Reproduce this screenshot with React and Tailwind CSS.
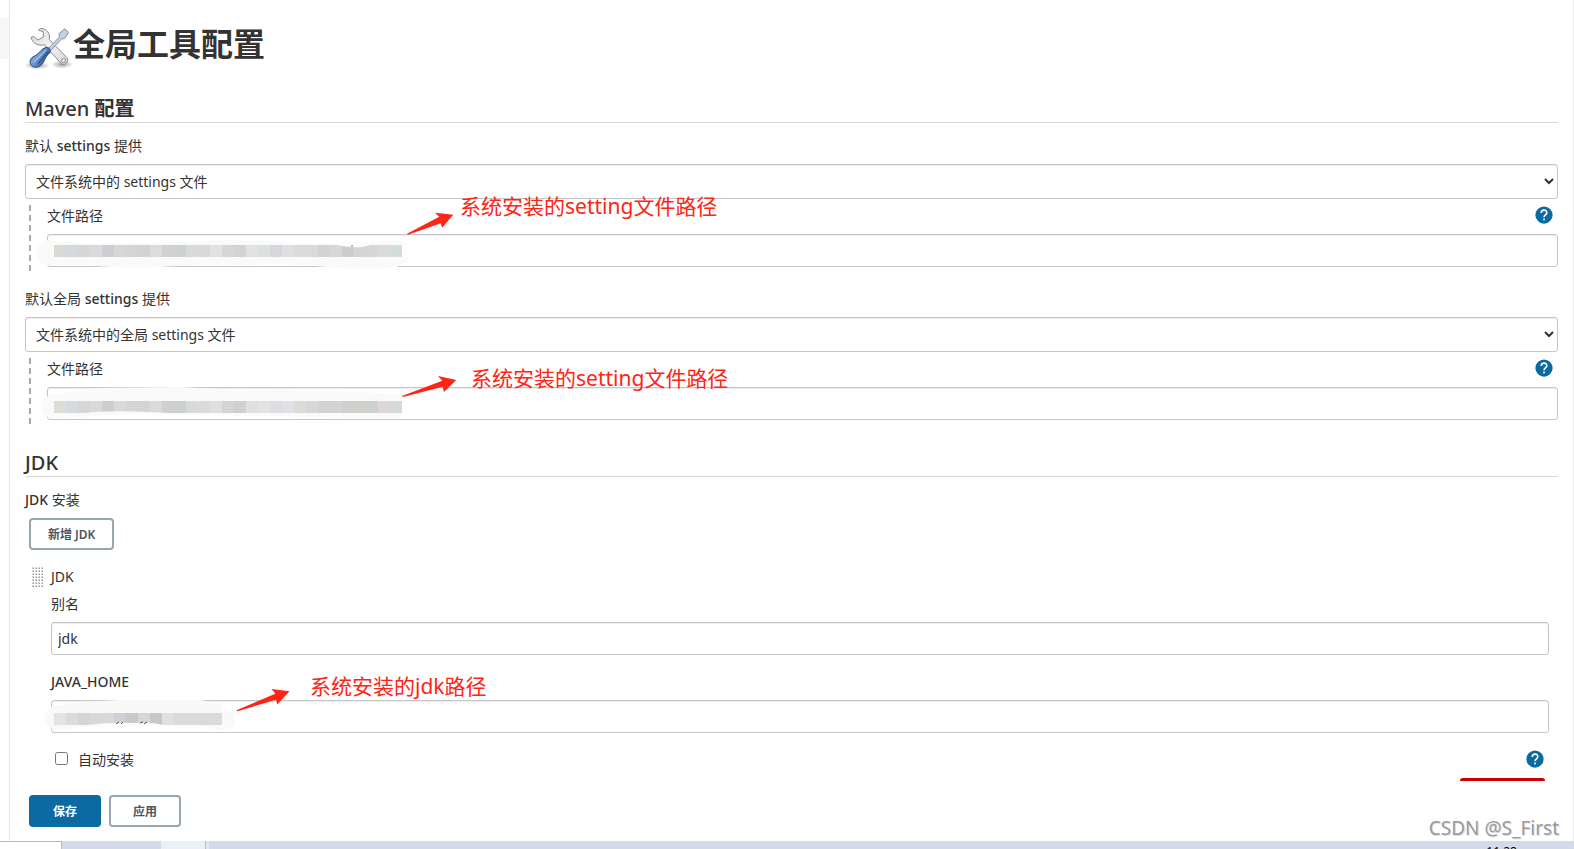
import React from "react";

const CELL = 12;

const MOSAIC_SETTINGS = [
  "#dcd9d5", "#d4d9df", "#d8d5d9", "#d8dadd", "#d0cdd2", "#d6d6d6", "#d3d5d5", "#d2d4d3", "#dddcda", "#d0d1d1",
  "#cdd1d2", "#d9dbda", "#d8dad9", "#e2e2e1", "#d6d6d6", "#d4d3d2", "#dfe3e5", "#dde0e0", "#d6d7da", "#e2dde0",
  "#dadcdc", "#d8dbda", "#d5d1d4", "#d6d7d7", "#cfccd0", "#d5d6d2", "#d3d7d7", "#dbdbda", "#d5dddc",
];

const MOSAIC_GLOBAL = [
  "#dddcd7", "#d5dadf", "#d7d6d7", "#dadadc", "#d0ccd0", "#d9d9d9", "#d3d5d4", "#d3d4d3", "#dbdad9", "#cfd1d1",
  "#cbd0d0", "#d8dad9", "#dadcda", "#e0e0df", "#d4d4d4", "#d2d0cf", "#dee0e2", "#e4e3e1", "#dddee0", "#e2e0e4",
  "#dbdcd9", "#d7d6d9", "#d5d2d5", "#d2d3d3", "#cfcfd0", "#cfcfcc", "#cdd0d0", "#dad8d6", "#d6dad9",
];

const MOSAIC_JDK = [
  "#e3e3e3", "#dbdbdc", "#d8d4d3", "#d8d8d8", "#d9d9d9", "#d2ced6", "#c9c9c9", "#d7d7d8", "#c7c7c7", "#e0e0df",
  "#dadad9", "#dadada", "#d9dada", "#dadadd",
];

function Mosaic({ x, y, colors }) {
  return colors.map((fill, i) => (
    <rect key={i} x={x + i * CELL} y={y} width={CELL} height={CELL} fill={fill} shapeRendering="crispEdges" />
  ));
}

function ToolsIcon() {
  return (
    <svg viewBox="0 0 48 48" className="size-12 shrink-0" aria-hidden="true">
      <defs>
        <linearGradient id="metal" x1="0" y1="0" x2="1" y2="1">
          <stop offset="0" stopColor="#d6d6d6" />
          <stop offset="0.5" stopColor="#f4f4f4" />
          <stop offset="1" stopColor="#d2d2d2" />
        </linearGradient>
        <linearGradient id="grip" x1="0" y1="0" x2="1" y2="0.6">
          <stop offset="0" stopColor="#2f62ad" />
          <stop offset="0.4" stopColor="#7ea6dc" />
          <stop offset="1" stopColor="#204a87" />
        </linearGradient>
        <radialGradient id="ground">
          <stop offset="0" stopColor="#000" stopOpacity="0.38" />
          <stop offset="1" stopColor="#000" stopOpacity="0" />
        </radialGradient>
      </defs>
      <ellipse cx="12" cy="42.500" rx="13" ry="4" fill="url(#ground)" />
      <ellipse cx="37" cy="41.500" rx="11" ry="4" fill="url(#ground)" />
      <path
        d="M15.500 5.500 C19.500 5 24 8.500 24.500 13 L24.300 16.500 L41.800 34.500 C44.500 38.500 40.500 43 36.300 40.800 L19.500 21.800 C13.500 23.300 7.500 20.500 6 14.500 L8.500 13.300 L13 17 L18.300 14 L18.300 8.800 L13.500 7 Z"
        fill="url(#metal)"
        stroke="#8b8d88"
        strokeWidth="1"
        strokeLinejoin="round"
      />
      <circle cx="38.500" cy="37.500" r="2" fill="#eee" stroke="#8b8d88" />
      <path
        d="M23.500 25.500 L34.500 13.800 L34 10.500 L39.800 5.800 L43.600 9.500 L39.500 15.500 L36.500 16 L25.800 27.500 Z"
        fill="#c6d0dc"
        stroke="#8795a6"
        strokeWidth="1"
        strokeLinejoin="round"
      />
      <path
        d="M20.500 24.500 C23 23.500 26 26 25 29.500 C22.500 32 20.500 34 19.500 37 C17.500 42 13 45.500 8.500 43.800 C4.500 42.300 4 37.500 7 34.500 C11 32.500 15 29.500 17.500 26 Z"
        fill="url(#grip)"
        stroke="#204a87"
        strokeWidth="1"
      />
      <path d="M21 27 L9.500 38.500" stroke="#b4cdee" strokeWidth="1.500" strokeLinecap="round" opacity="0.8" />
      <path d="M23 29 L13.500 40" stroke="#1c427c" strokeWidth="1.500" strokeLinecap="round" opacity="0.6" />
    </svg>
  );
}

function DragHandle() {
  return (
    <svg width="12" height="21" className="shrink-0" shapeRendering="crispEdges" aria-hidden="true">
      <defs>
        <pattern id="grain" width="3" height="3" patternUnits="userSpaceOnUse">
          <rect width="2" height="2" fill="#d6d6d6" />
          <rect x="1" y="1" width="1" height="1" fill="#8f8f8f" />
        </pattern>
      </defs>
      <rect width="12" height="21" fill="url(#grain)" />
    </svg>
  );
}

function HelpButton({ label }) {
  return (
    <button type="button" aria-label={label} className="flex h-5 w-[18px] shrink-0 items-center">
      <svg viewBox="0 0 24 24" className="size-[18px]">
        <circle cx="12" cy="12" r="11.500" fill="#0b6aa2" />
        <path
          d="M8.300 9.300 C8.300 4.200 15.700 4.200 15.700 9 C15.700 11.800 12 12 12 15"
          fill="none"
          stroke="#fff"
          strokeWidth="2.200"
        />
        <rect x="10.900" y="16.800" width="2.300" height="2.300" fill="#fff" />
      </svg>
    </button>
  );
}

function SectionTitle({ children }) {
  return (
    <h2 className="mt-6 border-b border-[#d9d9d9] text-[20px] leading-[27px] font-medium">{children}</h2>
  );
}

function ProviderSelect({ id, label, option }) {
  return (
    <>
      <label htmlFor={id} className="block text-[14px] leading-5">
        {label}
      </label>
      <select
        id={id}
        className="mt-2 block h-[35px] w-full rounded-[3px] border border-[#c6c6c6] bg-white px-[6px] text-[14px] shadow-[inset_0_1px_1px_rgba(0,0,0,0.075)]"
      >
        <option>{option}</option>
      </select>
    </>
  );
}

function TextField({ id, value }) {
  return (
    <input
      id={id}
      type="text"
      defaultValue={value}
      className="block h-[33px] w-full rounded-[3px] border border-[#c6c6c6] bg-white px-[6px] text-[14px] shadow-[inset_0_1px_1px_rgba(0,0,0,0.075)]"
    />
  );
}

function PathGroup({ id, children }) {
  return (
    <div className="mt-1.5 flex">
      <div className="mr-4 ml-1 w-[2px] shrink-0 bg-[repeating-linear-gradient(to_bottom,#a9a9a9_0px,#a9a9a9_6px,transparent_6px,transparent_10px)]" />
      <div className="grow pb-[5px]">
        <div className="mb-[7px] flex h-[22px] items-start justify-between pr-[5px]">
          <label htmlFor={id} className="text-[14px] leading-[22px]">
            文件路径
          </label>
          <HelpButton label="文件路径 帮助" />
        </div>
        <div className="relative">
          <TextField id={id} />
          {children}
        </div>
      </div>
    </div>
  );
}

function Note({ className, children }) {
  return (
    <p className={`pointer-events-none absolute text-[21px] leading-7 whitespace-nowrap text-[#ff2414] ${className}`}>
      {children}
    </p>
  );
}

export default function App() {
  return (
    <div className="flex min-h-screen flex-col bg-white font-['Noto_Sans','Noto_Sans_CJK_SC',sans-serif] text-[#333]">
      <div className="flex grow">
        <aside className="w-[10px] shrink-0 border-r border-[#e8e8e8] pt-[18px]">
          <div className="h-[41px] bg-[#f7f7f7]" />
        </aside>

        <main className="grow border-r border-[#ececec] pt-[23px] pr-[15px] pb-[14px] pl-[15px]">
          <header className="flex h-12">
            <ToolsIcon />
            <h1 className="text-[32px] leading-[42px] font-bold">全局工具配置</h1>
          </header>

          <SectionTitle>
            Maven <span className="font-bold">配置</span>
          </SectionTitle>
          <div className="mt-[13px]">
            <ProviderSelect
              id="settings"
              label={
                <>
                  默认 <span className="font-medium">settings</span> 提供
                </>
              }
              option="文件系统中的 settings 文件"
            />
            <PathGroup id="settings-path">
              <svg
                viewBox="35 208 430 64"
                className="pointer-events-none absolute -top-[26px] -left-3 h-16 w-[430px]"
                aria-hidden="true"
              >
                <path
                  d="M48 240 Q75 244 110 243 Q180 243 215 240 Q260 240 300 243 Q350 244 400 240 L408 244 L396 247 L396 257 L410 257 Q406 266 390 268 Q350 270 328 267 Q290 263 250 265 Q180 265 160 267 Q120 269 90 265 L45 265 Q36 260 36 252 Q37 243 48 240 Z"
                  fill="#fafafa"
                />
                <Mosaic x={54} y={245} colors={MOSAIC_SETTINGS} />
                <path d="M333 244 Q350 248 360 247 Q369 246 372 244 Z" fill="#fdfdfd" />
                <path d="M351 246 h2" stroke="#777" />
                <path
                  d="M407 233.700 L439.300 216.700 L435 212.700 L453.300 214.700 L442 227.700 L440.700 223.300 L408 234.700 Z"
                  fill="#ff2414"
                />
              </svg>
              <Note className="-top-[42px] left-[413px]">系统安装的setting文件路径</Note>
            </PathGroup>
          </div>

          <div className="mt-[17px]">
            <ProviderSelect
              id="global-settings"
              label={
                <>
                  默认全局 <span className="font-medium">settings</span> 提供
                </>
              }
              option="文件系统中的全局 settings 文件"
            />
            <PathGroup id="global-settings-path">
              <svg
                viewBox="35 368 430 64"
                className="pointer-events-none absolute -top-[19px] -left-3 h-16 w-[430px]"
                aria-hidden="true"
              >
                <path
                  d="M54 394 L78 391 L98 388 L180 387 L240 390 L282 389 L402 394 L402 416 Q398 420 385 418 L130 414 L78 417 L50 418 Q41 415 41 406 Q41 397 54 394 Z"
                  fill="#fafafa"
                />
                <Mosaic x={54} y={401} colors={MOSAIC_GLOBAL} />
                <path d="M84 413 Q110 410 150 412 L170 413 Z" fill="#fafafa" />
                <path
                  d="M402 396 L442.300 380.700 L438 376 L456.300 380 L444 392 L442.700 386.700 L403 397 Z"
                  fill="#ff2414"
                />
              </svg>
              <Note className="-top-[23px] left-[424px]">系统安装的setting文件路径</Note>
            </PathGroup>
          </div>

          <SectionTitle>JDK</SectionTitle>
          <p className="mt-[13px] text-[14px] leading-5">
            <span className="font-medium">JDK</span> 安装
          </p>
          <button
            type="button"
            className="mt-2 ml-1 block h-8 rounded-[4px] border-2 border-[#98a6b0] px-[17px] pt-px text-[12px] font-semibold text-[#4d545d]"
          >
            新增 JDK
          </button>

          <section className="mt-[17px] ml-[7px] flex items-start pr-[9px]">
            <DragHandle />
            <div className="ml-[7px] grow">
              <p className="text-[14px] leading-5">JDK</p>
              <label htmlFor="jdk-name" className="mt-[7px] mb-2 block text-[14px] leading-5">
                别名
              </label>
              <TextField id="jdk-name" value="jdk" />
              <label htmlFor="java-home" className="mt-[17px] mb-2 block text-[14px] leading-5 font-medium">
                JAVA_HOME
              </label>
              <div className="relative">
                <TextField id="java-home" />
                <svg
                  viewBox="35 680 265 64"
                  className="pointer-events-none absolute -top-5 -left-4 h-16 w-[265px]"
                  aria-hidden="true"
                >
                  <path
                    d="M54 706 L80 702 L120 700 L200 700 L222 704 L222 712 L236 712 L234 726 Q226 731 214 729 L196 724 L110 725 L80 727 Q60 731 50 728 Q44 724 44 717 Q45 709 54 706 Z"
                    fill="#f9f9f9"
                  />
                  <Mosaic x={54} y={713} colors={MOSAIC_JDK} />
                  <path d="M86 725 Q110 722 135 723 Q155 722 162 725 Z" fill="#fafafa" />
                  <path d="M119 722 l-3 2 M123 722 l-2 2 M143 722 l-3 1 M147 722 l-3 2" stroke="#555" fill="none" />
                  <path
                    d="M236.500 710.300 L275.300 693.700 L271.700 689 L289.500 691.300 L277.300 704.500 L276 699.700 L237.500 711.300 Z"
                    fill="#ff2414"
                  />
                </svg>
                <Note className="-top-[28px] left-[259px]">系统安装的jdk路径</Note>
              </div>
              <div className="mt-4 flex h-[22px] items-start justify-between pr-[5px]">
                <label className="flex items-start text-[14px] leading-[22px]">
                  <input type="checkbox" className="mt-[3px] mr-[10px] ml-1 size-[13px]" />
                  自动安装
                </label>
                <HelpButton label="自动安装 帮助" />
              </div>
              <div className="mt-[7px] mr-1 ml-auto h-[3px] w-[85px] rounded-t-[3px] bg-[#cc0003]" />
            </div>
          </section>

          <div className="mt-[14px] ml-1 flex gap-2">
            <button
              type="button"
              className="h-8 w-[72px] rounded-[4px] bg-[#0b6aa2] pt-px text-[12px] font-bold text-white"
            >
              保存
            </button>
            <button
              type="button"
              className="h-8 w-[72px] rounded-[4px] border-2 border-[#98a6b0] pt-px text-[12px] font-semibold text-[#4d545d]"
            >
              应用
            </button>
          </div>
        </main>
      </div>

      <footer className="relative flex h-2 shrink-0 bg-[#d3dbeb]">
        <div className="w-[62px] border-t border-r border-[#bbb] bg-white" />
        <div className="ml-[99px] w-[45px] border-r border-[#b4bccb] bg-[#eaeff8]" />
        <div className="w-[3px] bg-[#e2e8f3]" />
        <div className="absolute top-0 right-[57px] h-2 overflow-hidden">
          <p className="pt-[3px] text-[12px] leading-4 text-black">11:28</p>
        </div>
        <p className="absolute right-[15px] bottom-2 text-[19px] leading-[26px] text-[#9a9a9a] [text-shadow:1px_1px_0_#e0e0e0]">
          CSDN @S_First
        </p>
      </footer>
    </div>
  );
}
